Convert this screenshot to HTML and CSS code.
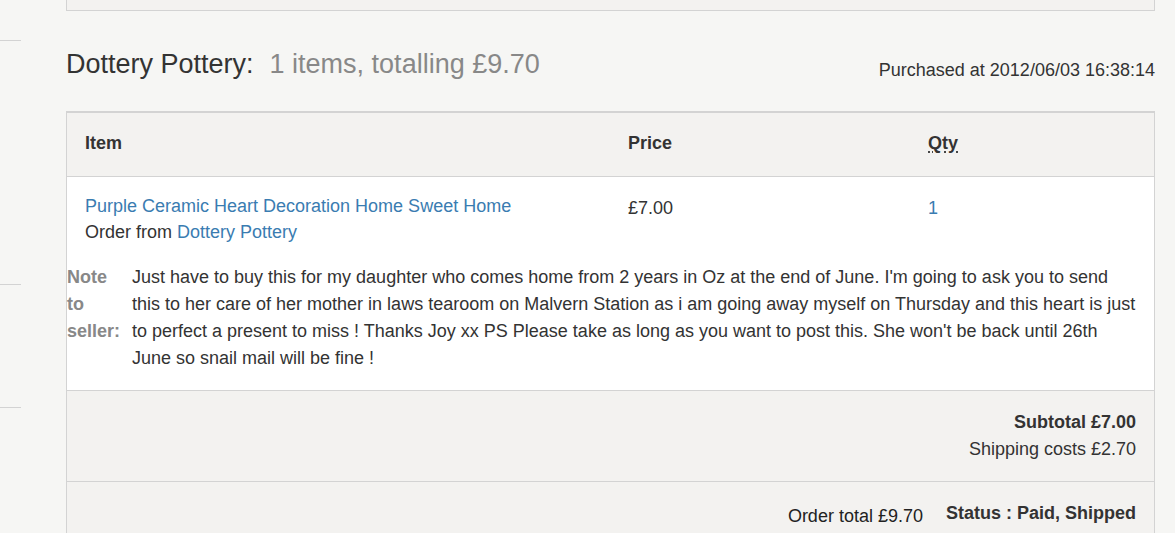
FILE: index.html
```html
<!DOCTYPE html>
<html>
<head>
<meta charset="utf-8">
<link rel="stylesheet" href="styles.css">
</head>
<body>
<div class="page">
  <aside class="sidebar">
    <div class="side-item s1"></div>
    <div class="side-item s2"></div>
    <div class="side-item s3"></div>
  </aside>
  <main class="main">
    <div class="prev-box"></div>
    <div class="order-head">
      <h1 class="shop-title">Dottery Pottery:<span class="summary">1 items, totalling £9.70</span></h1>
      <div class="purchased">Purchased at 2012/06/03 16:38:14</div>
    </div>
    <div class="order-box">
      <div class="row head-row">
        <div class="cell c-item">Item</div>
        <div class="cell c-price">Price</div>
        <div class="cell c-qty"><abbr class="abbr" title="Quantity">Qty</abbr></div>
      </div>
      <div class="body-row">
        <div class="row">
          <div class="cell c-item item-cell">
            <a class="link" href="#">Purple Ceramic Heart Decoration Home Sweet Home</a><br>
            Order from <a class="link" href="#">Dottery Pottery</a>
          </div>
          <div class="cell c-price">£7.00</div>
          <div class="cell c-qty"><span class="link">1</span></div>
        </div>
        <div class="note">
          <div class="note-label">Note to seller:</div>
          <div class="note-text">Just have to buy this for my daughter who comes home from 2 years in Oz at the end of June. I'm going to ask you to send<br>this to her care of her mother in laws tearoom on Malvern Station as i am going away myself on Thursday and this heart is just<br>to perfect a present to miss ! Thanks Joy xx PS Please take as long as you want to post this. She won't be back until 26th<br>June so snail mail will be fine !</div>
        </div>
      </div>
      <div class="totals">
        <div class="subtotal">Subtotal £7.00</div>
        <div class="shipping">Shipping costs £2.70</div>
      </div>
      <div class="final">
        <div class="order-total">Order total £9.70</div>
        <div class="status">Status : Paid, Shipped</div>
      </div>
    </div>
  </main>
</div>
</body>
</html>
```

FILE: styles.css
```css
html, body {
  margin: 0;
  padding: 0;
  background: #f6f6f4;
  font-family: "Liberation Sans", Arial, sans-serif;
  font-size: 18px;
  color: #333;
}
.page {
  display: flex;
  align-items: flex-start;
}
.sidebar {
  width: 21px;
  margin-right: 45px;
  flex-shrink: 0;
}
.side-item {
  border-bottom: 1px solid #d3d3d3;
}
.s1 { height: 40px; }
.s2 { height: 243px; }
.s3 { height: 122px; }
.main {
  width: 1089px;
  flex-shrink: 0;
}
.prev-box {
  height: 10px;
  background: #f3f2f0;
  border: 1px solid #d3d3d3;
  border-top: none;
}
.order-head {
  display: flex;
  justify-content: space-between;
  align-items: flex-start;
  margin: 38px 0 27px;
}
.shop-title {
  margin: 0;
  font-size: 27px;
  font-weight: normal;
  line-height: 30px;
  color: #333;
}
.summary {
  color: #888;
  margin-left: 16px;
}
.purchased {
  margin-top: 8px;
  line-height: 27px;
  font-size: 18px;
  color: #333;
}
.order-box {
  border: 1px solid #d3d3d3;
  border-top: 2px solid #d3d3d3;
  background: #fff;
}
.row {
  display: grid;
  grid-template-columns: 543px 300px 1fr;
  line-height: 27px;
}
.head-row {
  background: #f3f2f0;
  border-bottom: 1px solid #d3d3d3;
  font-weight: bold;
}
.head-row .cell {
  padding: 17px 18px 19px;
}
.abbr {
  text-decoration: underline dotted;
  text-underline-offset: 3px;
}
.body-row .cell {
  padding: 18px 18px 16px;
}
.body-row .item-cell {
  padding-top: 16px;
  line-height: 26px;
  padding-bottom: 18px;
}
.link {
  color: #3a7cb1;
  text-decoration: none;
}
.note {
  display: flex;
  line-height: 27px;
  padding-top: 1px;
  padding-bottom: 18px;
  border-bottom: 1px solid #d3d3d3;
}
.note-label {
  width: 58px;
  margin-right: 7px;
  flex-shrink: 0;
  font-weight: bold;
  color: #888;
}
.note-text {
  flex: 1;
  padding-right: 8px;
  color: #333;
}
.totals {
  background: #f3f2f0;
  border-bottom: 1px solid #d3d3d3;
  padding: 18px 18px 18px;
  text-align: right;
  line-height: 27px;
}
.subtotal {
  font-weight: bold;
}
.final {
  background: #f3f2f0;
  display: flex;
  justify-content: flex-end;
  align-items: flex-start;
  gap: 23px;
  padding: 0 18px 20px;
  line-height: 27px;
}
.order-total {
  padding-top: 21px;
  color: #222;
}
.status {
  padding-top: 18px;
  font-weight: bold;
}
```
